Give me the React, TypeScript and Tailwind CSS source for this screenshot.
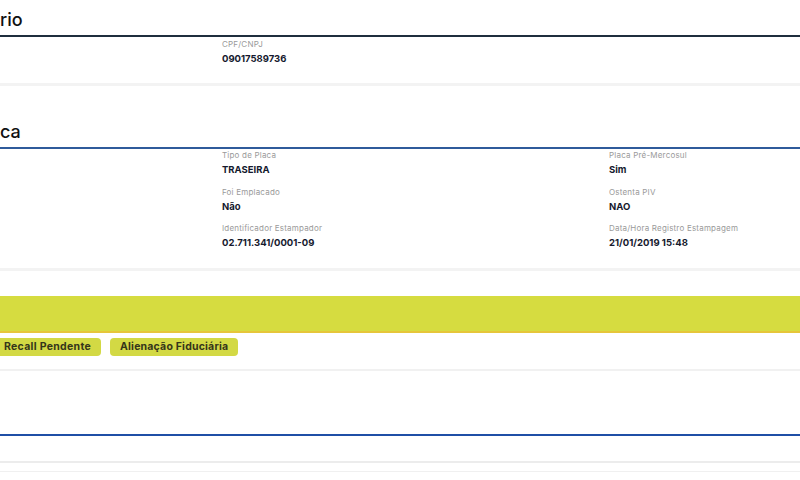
import React from "react";

function Field({ label, value }: { label: string; value: string }) {
  return (
    <div className="flex flex-col">
      <span className="text-[8px] leading-[12px] text-[#9a9a9a] tracking-[0.2px]">{label}</span>
      <span className="mt-[2px] text-[9.5px] leading-[13px] font-bold text-[#15192e]">{value}</span>
    </div>
  );
}

export default function App() {
  return (
    <div className="w-[800px] h-[480px] overflow-hidden bg-white font-['Inter',sans-serif]">
      {/* Section 1 */}
      <div className="h-[83px] flex flex-col">
        <div className="h-[35px] flex items-end pb-[3px]">
          <span className="text-[18px] leading-[24px] font-medium text-[#111]">rio</span>
        </div>
        <div className="h-[2px] bg-[#1f2e3d]" />
        <div className="pl-[222px] pt-[1px]">
          <Field label="CPF/CNPJ" value="09017589736" />
        </div>
      </div>
      <div className="h-[3px] bg-[#f3f3f3]" />

      {/* Section 2 */}
      <div className="h-[182px] flex flex-col">
        <div className="h-[61px] flex items-end pb-[3px]">
          <span className="text-[18px] leading-[24px] font-medium text-[#111]">ca</span>
        </div>
        <div className="h-[2px] bg-[#2f5b9b]" />
        <div className="flex">
          <div className="ml-[222px] w-[387px] flex flex-col gap-[9.5px]">
            <Field label="Tipo de Placa" value="TRASEIRA" />
            <Field label="Foi Emplacado" value="Não" />
            <Field label="Identificador Estampador" value="02.711.341/0001-09" />
          </div>
          <div className="flex flex-col gap-[9.5px]">
            <Field label="Placa Pré-Mercosul" value="Sim" />
            <Field label="Ostenta PIV" value="NAO" />
            <Field label="Data/Hora Registro Estampagem" value="21/01/2019 15:48" />
          </div>
        </div>
      </div>
      <div className="h-[3px] bg-[#f3f3f3]" />

      {/* Yellow banner */}
      <div className="h-[25px]" />
      <div className="h-[37px] bg-[#d6dc40] border-b-2 border-[#e6c63a]" />
      <div className="h-[36px] flex items-start pt-[5px] gap-[9px] ml-[-6px]">
        <div className="h-[18px] px-[10px] flex items-center rounded-[4px] bg-[#d3d944]">
          <span className="text-[10.5px] font-bold tracking-[0.3px] text-[#35351a]">Recall Pendente</span>
        </div>
        <div className="h-[18px] px-[10px] flex items-center rounded-[4px] bg-[#d3d944]">
          <span className="text-[10.5px] font-bold tracking-[0.2px] text-[#35351a]">Alienação Fiduciária</span>
        </div>
      </div>
      <div className="h-[2px] bg-[#f1f1f1]" />

      {/* Last section */}
      <div className="h-[63px]" />
      <div className="h-[2px] bg-[#1f4fa6]" />
      <div className="h-[25px]" />
      <div className="h-[2px] bg-[#ececec]" />
      <div className="h-[8px]" />
      <div className="h-[1px] bg-[#f0f0f0]" />
    </div>
  );
}
